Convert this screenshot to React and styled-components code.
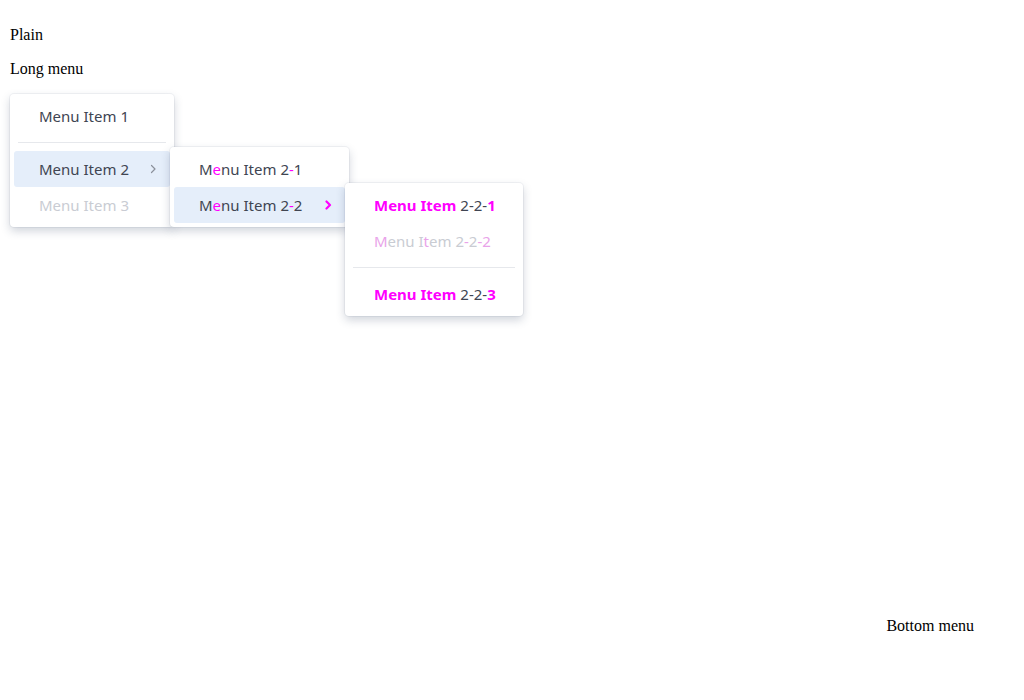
import React from "react"
import styled, { createGlobalStyle } from "styled-components"

const Global = createGlobalStyle`
  html, body { margin: 0; padding: 0; background: #fff; }
  body {
    font-family: "Liberation Serif", "Times New Roman", serif;
    font-size: 16px;
    color: #000;
  }
`

const Page = styled.div`
  position: relative;
  height: 700px;
  padding: 26px 10px 0;
  box-sizing: border-box;
`

const Label = styled.div`
  line-height: 18px;
  margin-bottom: 16px;
`

const MenuBox = styled.div`
  position: ${p => (p.$sub ? "absolute" : "relative")};
  top: ${p => (p.$sub ? "-4px" : "auto")};
  left: ${p => (p.$sub ? "100%" : "auto")};
  width: ${p => p.$width}px;
  box-sizing: border-box;
  padding: 4px;
  margin-top: ${p => (p.$sub ? 0 : 16)}px;
  background: #fff;
  border-radius: 4px;
  box-shadow: 0 0 0 1px rgba(20, 40, 80, 0.05), 0 4px 10px rgba(40, 60, 90, 0.22);
  font-family: "Noto Sans", "Open Sans", sans-serif;
  font-size: 15px;
  z-index: ${p => p.$z || 1};
`

const Item = styled.div`
  position: relative;
  display: flex;
  align-items: center;
  justify-content: space-between;
  height: 36px;
  padding: 0 12px 0 ${p => p.$pad || 25}px;
  border-radius: 3px;
  color: ${p => (p.$disabled ? "#c9ccd3" : "#404552")};
  background: ${p => (p.$active ? "#e5eefa" : "transparent")};
  white-space: nowrap;
`

const Divider = styled.div`
  height: 1px;
  background: #e6e8ec;
  margin: 8px 4px;
`

const ChevronSvg = styled.svg`
  flex: none;
  margin-right: ${p => p.$mr || 0}px;
`

function Chevron({ hot, mr }) {
  return (
    <ChevronSvg $mr={mr} width="7" height="10" viewBox="0 0 7 10">
      <path
        d="M1.5 1.5 L5 5 L1.5 8.5"
        fill="none"
        stroke={hot ? "#ff00ff" : "#8b909b"}
        strokeWidth={hot ? 2.2 : 1.2}
        strokeLinecap="round"
        strokeLinejoin="round"
      />
    </ChevronSvg>
  )
}

const Hot = styled.span`
  color: ${p => (p.$light ? "#e9a3e9" : "#ff00ff")};
  font-weight: ${p => (p.$bold ? 700 : "inherit")};
`

const Plain = styled.span``

const BottomLabel = styled.div`
  position: absolute;
  right: 50px;
  top: 617px;
  line-height: 18px;
`

export default function App() {
  return (
    <Page>
      <Global />
      <Label>Plain</Label>
      <Label>Long menu</Label>
      <MenuBox $width={164}>
        <Item>Menu Item 1</Item>
        <Divider />
        <Item $active>
          <Plain>Menu Item 2</Plain>
          <Chevron mr={1} />
          <MenuBox $sub $width={179} $z={2}>
            <Item>
              <Plain>M<Hot>e</Hot>nu Item 2<Hot>-</Hot>1</Plain>
            </Item>
            <Item $active>
              <Plain>M<Hot>e</Hot>nu Item 2<Hot>-</Hot>2</Plain>
              <Chevron hot mr={1} />
              <MenuBox $sub $width={178} $z={3}>
                <Item $pad={25}>
                  <Plain><Hot $bold>Menu Item</Hot> 2-2-<Hot $bold>1</Hot></Plain>
                </Item>
                <Item $pad={25} $disabled>
                  <Plain><Hot $light>M</Hot>enu I<Hot $light>t</Hot>em 2<Hot $light>-</Hot>2<Hot $light>-2</Hot></Plain>
                </Item>
                <Divider />
                <Item $pad={25}>
                  <Plain><Hot $bold>Menu Item</Hot> 2-2-<Hot $bold>3</Hot></Plain>
                </Item>
              </MenuBox>
            </Item>
          </MenuBox>
        </Item>
        <Item $disabled>Menu Item 3</Item>
      </MenuBox>
      <BottomLabel>Bottom menu</BottomLabel>
    </Page>
  )
}
